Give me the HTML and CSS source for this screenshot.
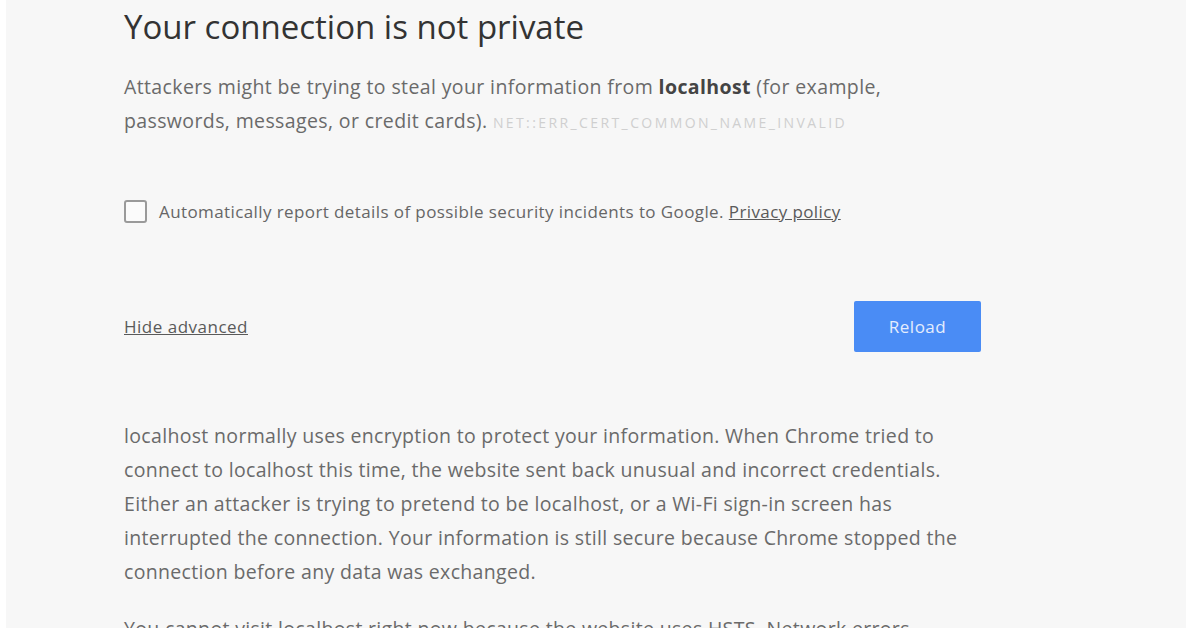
FILE: index.html
```html
<!DOCTYPE html>
<html>
<head>
<meta charset="utf-8">
<link rel="stylesheet" href="styles.css">
</head>
<body>
<div class="page">
  <div class="content">
    <h1 class="title">Your connection is not private</h1>
    <p class="lead">Attackers might be trying to steal your information from <strong>localhost</strong> (for example,<br>passwords, messages, or credit cards). <span class="code">NET::ERR_CERT_COMMON_NAME_INVALID</span></p>
    <div class="report">
      <span class="checkbox"></span>
      <span class="report-text">Automatically report details of possible security incidents to Google. <a class="link">Privacy policy</a></span>
    </div>
    <div class="actions">
      <a class="link hide">Hide advanced</a>
      <button class="reload">Reload</button>
    </div>
    <p class="details">localhost normally uses encryption to protect your information. When Chrome tried to<br>connect to localhost this time, the website sent back unusual and incorrect credentials.<br>Either an attacker is trying to pretend to be localhost, or a Wi-Fi sign-in screen has<br>interrupted the connection. Your information is still secure because Chrome stopped the<br>connection before any data was exchanged.</p>
    <p class="details more">You cannot visit localhost right now because the website uses HSTS. Network errors<br>and attacks are usually temporary, so this page will probably work later.</p>
  </div>
</div>
</body>
</html>
```
FILE: styles.css
```css
html, body {
  margin: 0;
  padding: 0;
  background: #ffffff;
  height: 628px;
  overflow: hidden;
}
.page {
  margin: 0 10px 0 6px;
  height: 628px;
  background: #f7f7f7;
  overflow: hidden;
  font-family: "Open Sans", "Noto Sans", sans-serif;
}
.content {
  padding-left: 118px;
  width: 857px;
}
.title {
  margin: 7px 0 0;
  font-size: 33px;
  line-height: 40px;
  font-weight: 400;
  color: #333333;
}
.lead {
  margin: 23px 0 0;
  font-size: 19.5px;
  letter-spacing: 0.38px;
  line-height: 34px;
  color: #6a6a6a;
  white-space: nowrap;
}
.lead strong {
  color: #444;
  font-weight: 700;
}
.code {
  font-size: 14px;
  letter-spacing: 2.4px;
  color: #cfcfcf;
  text-transform: uppercase;
}
.report {
  margin-top: 54px;
  height: 34px;
  display: flex;
  align-items: center;
  gap: 12px;
}
.checkbox {
  width: 19px;
  height: 19px;
  border: 2px solid #9a9a9a;
  border-radius: 3px;
  background: #fbfbfb;
}
.report-text {
  font-size: 17px;
  letter-spacing: 0.4px;
  color: #666666;
}
.link {
  color: #5a5a5a;
  text-decoration: underline;
}
.actions {
  margin-top: 73px;
  display: flex;
  justify-content: space-between;
  align-items: center;
}
.hide {
  font-size: 17px;
  letter-spacing: 0.5px;
}
.reload {
  width: 127px;
  height: 51px;
  border: none;
  border-radius: 2px;
  background: #4a8cf5;
  color: #e4edfd;
  font-family: "Open Sans", "Noto Sans", sans-serif;
  font-size: 17px;
  letter-spacing: 0.5px;
  padding: 0;
}
.details {
  margin: 67px 0 0;
  font-size: 19.5px;
  letter-spacing: 0.33px;
  line-height: 34px;
  color: #6a6a6a;
  white-space: nowrap;
}
.details.more {
  margin-top: 23px;
}
```
